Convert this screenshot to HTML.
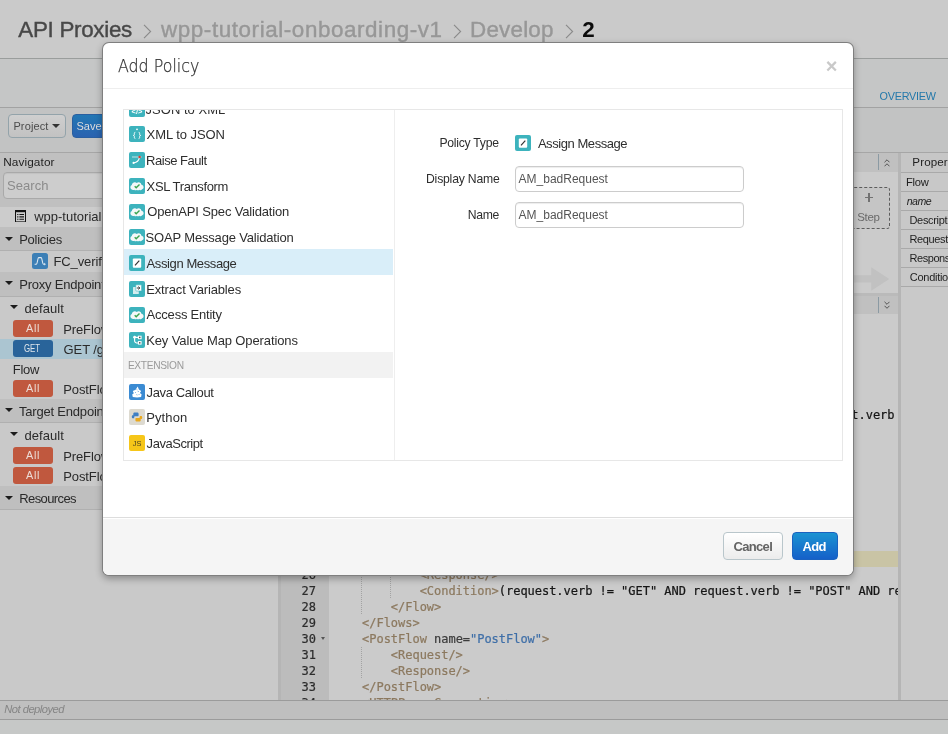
<!DOCTYPE html>
<html lang="en">
<head>
<meta charset="utf-8">
<title>API Proxies - wpp-tutorial-onboarding-v1 - Develop</title>
<style>
*{box-sizing:border-box}
html,body{margin:0;padding:0}
body{width:948px;height:734px;overflow:hidden;position:relative;will-change:transform;background:#c6c8c7;font-family:"Liberation Sans",sans-serif;font-size:13px;color:#2b2b2b}
.abs{position:absolute}
.t{position:absolute;white-space:nowrap;line-height:20px;height:20px}
.mono{font-family:"DejaVu Sans Mono","Liberation Mono",monospace;font-size:12px}
/* page chrome (dimmed by backdrop) */
#hdr{left:0;top:0;width:948px;height:58px;background:#cacaca;border-bottom:1px solid #9a9d9c;height:59px}
#sub{left:0;top:59px;width:948px;height:49px;background:#c5c6c6;border-bottom:1px solid #a2a2a2}
#tool{left:0;top:108px;width:948px;height:45px;background:#c2c3c3;border-bottom:1px solid #a6a6a6}
#nav{left:0;top:153px;width:278px;height:547px;background:#c9c9c9;overflow:hidden}
#navhead{left:0;top:0;width:278px;height:54px;background:#c0c0c0}
.nh{position:absolute;left:0;width:278px;background:#bfbfbf;border-bottom:1px solid #b0b0b0}
.caret{position:absolute;width:0;height:0;border-left:4px solid transparent;border-right:4px solid transparent;border-top:4px solid #1c1c1c}
.badge{position:absolute;left:13px;width:40px;height:17px;border-radius:3px;background:#c0583e}
.badge.get{background:#29649a}
#split1{left:278px;top:153px;width:3px;height:547px;background:#b5b5b5}
#split2{left:898px;top:153px;width:3px;height:547px;background:#b5b5b5}
#center{left:281px;top:153px;width:617px;height:547px;background:#cbcbcb;overflow:hidden}
#right{left:901px;top:153px;width:47px;height:547px;background:#c9c9c9;overflow:hidden}
.prow{position:absolute;left:0;width:47px;height:19px;border-bottom:1px solid #a9a9a9;background:#c8c8c8}
#status{left:0;top:700px;width:948px;height:20px;background:#bfbfbf;border-top:1px solid #9b9b9b;border-bottom:1px solid #9b9b9b}
/* modal */
#modal{left:102px;top:42px;width:752px;height:534px;background:#fff;border:1px solid rgba(0,0,0,.5);border-radius:7px;box-shadow:0 3px 7px rgba(0,0,0,.3);overflow:hidden}
#mhead{left:0;top:0;width:750px;height:46px;border-bottom:1px solid #eee}
#mfoot{left:0;top:474px;width:750px;height:58px;background:#f5f5f5;border-top:1px solid #ddd;box-shadow:inset 0 1px 0 #fff}
#pbox{left:20px;top:66px;width:720px;height:352px;border:1px solid #e7e7e7;overflow:hidden}
#plist{left:0;top:0;width:271px;height:350px;border-right:1px solid #eee;overflow:hidden}
.ic{position:absolute;left:5px;width:16px;height:16px;border-radius:2px;background:#3fb4bf;overflow:hidden}
.inp{position:absolute;left:391px;width:229px;height:26px;border:1px solid #ccc;border-radius:4px;background:#fff;box-shadow:inset 0 1px 1px rgba(0,0,0,.075)}
.cl{position:absolute;left:52.300px;letter-spacing:-.03px;-webkit-text-stroke:.22px;white-space:pre;font-family:"DejaVu Sans Mono","Liberation Mono",monospace;font-size:12px;line-height:16px;height:16px}
.ln{position:absolute;-webkit-text-stroke:.2px;left:0;width:35px;text-align:right;font-family:"DejaVu Sans Mono","Liberation Mono",monospace;font-size:12px;line-height:16px;height:16px;color:#2c2c2c}
.ig{position:absolute;width:1px;background:repeating-linear-gradient(to bottom,#a3a3a3 0,#a3a3a3 1px,transparent 1px,transparent 2px)}
.btn{position:absolute;top:489px;height:28px;border-radius:4px}
</style>
</head>
<body>
<div id="hdr" class="abs"></div>
<div id="sub" class="abs"></div>
<div id="tool" class="abs"><div class="abs" style="left:8px;top:6px;width:58px;height:24px;border:1px solid #93a3aa;border-radius:4px;background:linear-gradient(#cfcfcf,#c2c2c2)"></div><div class="abs" style="left:52.200px;top:16px;width:0;height:0;border-left:4px solid transparent;border-right:4px solid transparent;border-top:4.400px solid #333"></div><div class="abs" style="left:72px;top:6px;width:46px;height:24px;border-radius:4px;background:linear-gradient(#2277b4,#2a62b0);border:1px solid #2a5fa0"></div></div>
<svg class="abs" style="left:142.5px;top:24px" width="9" height="15" viewBox="0 0 9 15"><path d="M1 .8l6.600 6.700L1 14.200" fill="none" stroke="#8a8a8a" stroke-width="1.100"/></svg><svg class="abs" style="left:453px;top:24px" width="9" height="15" viewBox="0 0 9 15"><path d="M1 .8l6.600 6.700L1 14.200" fill="none" stroke="#8a8a8a" stroke-width="1.100"/></svg><svg class="abs" style="left:565px;top:24px" width="9" height="15" viewBox="0 0 9 15"><path d="M1 .8l6.600 6.700L1 14.200" fill="none" stroke="#8a8a8a" stroke-width="1.100"/></svg>
<div id="nav" class="abs"><div id="navhead" class="abs"></div>
<div class="abs" style="left:3px;top:18.500px;width:272px;height:27px;border:1px solid #a9a9a9;border-radius:4px;background:#cdcdcd;box-shadow:inset 0 1px 1px rgba(0,0,0,.06)"></div>
<div class="abs" style="left:0;top:53.500px;width:278px;height:20.500px;background:#cccccc"></div>
<svg class="abs" style="left:15px;top:56.800px" width="11" height="12.400" viewBox="0 0 11 12.400"><rect x=".5" y="1" width="10" height="10.900" fill="none" stroke="#111" stroke-width="1"/><rect x="0" y="0" width="11" height="2.200" fill="#111"/><path d="M2.200 4.500h1.200M4.400 4.500h4.600M2.200 6.900h1.200M4.400 6.900h4.600M2.200 9.300h1.200M4.400 9.300h4.600" stroke="#111" stroke-width="1.100"/></svg>
<div class="nh" style="top:74px;height:24.3px"></div>
<div class="nh" style="top:119px;height:24.5px"></div>
<div class="nh" style="top:246px;height:24.4px"></div>
<div class="nh" style="top:333px;height:24.2px"></div>
<div class="caret" style="left:5px;top:83.5px"></div>
<div class="caret" style="left:5px;top:128.4px"></div>
<div class="caret" style="left:10.4px;top:152.4px"></div>
<div class="caret" style="left:5px;top:255.4px"></div>
<div class="caret" style="left:10.4px;top:279.3px"></div>
<div class="caret" style="left:5px;top:342.5px"></div>
<div class="abs" style="left:32px;top:100px;width:16px;height:16px;border-radius:2.500px;background:#3c7fb6"><svg width="16" height="16" viewBox="0 0 16 16" style="display:block;"><path d="M2.600 11.200h1.600c1.400 0 1.400-6.600 2.400-6.600h2.600c1 0 1 6.600 2.400 6.600h1" fill="none" stroke="#dfe9f2" stroke-width="1.100"/><path d="M12.200 9.800l1.700 1.400-1.700 1.400z" fill="#dfe9f2"/></svg></div>
<div class="abs" style="left:0;top:186px;width:278px;height:19.600px;background:#abc5d1"></div>
<div class="badge" style="top:167px"></div>
<div class="badge get" style="top:187px"></div>
<div class="badge" style="top:227px"></div>
<div class="badge" style="top:294px"></div>
<div class="badge" style="top:314px"></div>
<span class="t" style="left:3.20px;top:-1.30px;font-size:11.8px;color:#1f1f1f;letter-spacing:0.100px;">Navigator</span>
<span class="t" style="left:7.10px;top:22.70px;font-size:13px;color:#8b8b8b;letter-spacing:0.020px;">Search</span>
<span class="t" style="left:34.20px;top:54.40px;font-size:13px;color:#2a2a2a;">wpp-tutorial-onboarding-v1</span>
<span class="t" style="left:19.20px;top:76.50px;font-size:13px;color:#2a2a2a;letter-spacing:-0.257px;">Policies</span>
<span class="t" style="left:53.40px;top:98.50px;font-size:13px;color:#2a2a2a;letter-spacing:-0.100px;">FC_verifyAPIKey</span>
<span class="t" style="left:19.20px;top:121.60px;font-size:13px;color:#2a2a2a;letter-spacing:-0.200px;">Proxy Endpoints</span>
<span class="t" style="left:24.40px;top:145.60px;font-size:13px;color:#2a2a2a;letter-spacing:0.067px;">default</span>
<span class="t" style="left:26.10px;top:164.50px;font-size:10.8px;color:#ecdcd6;letter-spacing:0.600px;">All</span>
<span class="t" style="left:63.20px;top:166.80px;font-size:13px;color:#2a2a2a;letter-spacing:-0.100px;">PreFlow</span>
<span class="t" style="left:24.10px;top:185.70px;font-size:10px;color:#dfe6ec;transform:scaleX(0.786);transform-origin:0 0;">GET</span>
<span class="t" style="left:63.60px;top:186.60px;font-size:13px;color:#2a2a2a;letter-spacing:-0.100px;">GET /getstarted</span>
<span class="t" style="left:12.70px;top:206.70px;font-size:13px;color:#2a2a2a;letter-spacing:-0.233px;">Flow</span>
<span class="t" style="left:26.10px;top:224.50px;font-size:10.8px;color:#ecdcd6;letter-spacing:0.600px;">All</span>
<span class="t" style="left:63.20px;top:226.70px;font-size:13px;color:#2a2a2a;letter-spacing:-0.100px;">PostFlow</span>
<span class="t" style="left:19.00px;top:248.60px;font-size:13px;color:#2a2a2a;letter-spacing:-0.200px;">Target Endpoints</span>
<span class="t" style="left:24.40px;top:272.60px;font-size:13px;color:#2a2a2a;letter-spacing:0.067px;">default</span>
<span class="t" style="left:26.10px;top:291.50px;font-size:10.8px;color:#ecdcd6;letter-spacing:0.600px;">All</span>
<span class="t" style="left:63.20px;top:293.80px;font-size:13px;color:#2a2a2a;letter-spacing:-0.100px;">PreFlow</span>
<span class="t" style="left:26.10px;top:311.50px;font-size:10.8px;color:#ecdcd6;letter-spacing:0.600px;">All</span>
<span class="t" style="left:63.20px;top:313.80px;font-size:13px;color:#2a2a2a;letter-spacing:-0.100px;">PostFlow</span>
<span class="t" style="left:19.20px;top:335.60px;font-size:13px;color:#2a2a2a;letter-spacing:-0.588px;">Resources</span></div>
<div id="split1" class="abs"></div>
<div id="center" class="abs"><div class="abs" style="left:0;top:0;width:617px;height:18.600px;background:#c0c0c0"></div>
<div class="abs" style="left:597px;top:1.200px;width:1px;height:15.500px;background:#8b9aa3"></div>
<svg class="abs" style="left:603px;top:6.3px" width="6" height="8.200" viewBox="0 0 6 8.200"><path d="M.5 3.300L3 .8l2.500 2.500M.5 7.300L3 4.800l2.500 2.500" fill="none" stroke="#484848" stroke-width=".9"/></svg>
<div class="abs" style="left:520px;top:34px;width:88.800px;height:41.800px;border:1px dashed #5c5c5c;border-radius:3px;background:#c5c5c5"></div>
<div class="abs" style="left:583.500px;top:43.900px;width:8.400px;height:1.500px;background:#727272"></div>
<div class="abs" style="left:587px;top:40.400px;width:1.500px;height:8.400px;background:#727272"></div>
<svg class="abs" style="left:500px;top:114px" width="109" height="24" viewBox="0 0 109 24"><path d="M0 8.200h90.200V.2L108.300 12 90.200 23.800V15.400H0z" fill="#c1c1c1"/></svg>
<div class="abs" style="left:0;top:140.300px;width:617px;height:2.600px;background:#bababa"></div>
<div class="abs" style="left:0;top:142.800px;width:617px;height:18.400px;background:#c0c0c0"></div>
<div class="abs" style="left:597px;top:144px;width:1px;height:16px;background:#8b9aa3"></div>
<svg class="abs" style="left:603px;top:148px" width="6" height="8.200" viewBox="0 0 6 8.200"><path d="M.5 .8L3 3.300 5.500.8M.5 4.800L3 7.300l2.500-2.500" fill="none" stroke="#484848" stroke-width=".9"/></svg>
<div id="ed" class="abs" style="left:0;top:161.200px;width:617px;height:386px;background:#cbcbcb"></div>
<div class="abs" style="left:0;top:161.200px;width:48px;height:386px;background:#bcbcbc"></div>
<div class="abs" style="left:48px;top:397.500px;width:569px;height:16px;background:#c9c4a5"></div>
<div class="abs" style="left:0;top:397.500px;width:48px;height:16px;background:#b4b4b4"></div>
<div class="ig" style="left:80.3px;top:413.5px;height:48.0px"></div>
<div class="ig" style="left:109.3px;top:413.5px;height:32.0px"></div>
<div class="ig" style="left:80.3px;top:493.5px;height:32.0px"></div>
<div class="abs" style="left:39.500px;top:484px;width:0;height:0;border-left:2.600px solid transparent;border-right:2.600px solid transparent;border-top:3.200px solid #555"></div>
<div class="cl" style="top:253.5px">            <span style="color:#8c795f">&lt;Condition&gt;</span><span style="color:#161616">(proxy.pathsuffix MatchesPath "/get") and (request.verb = "GET")</span><span style="color:#8c795f">&lt;/Condition&gt;</span></div>
<div class="ln" style="top:253.5px">16</div>
<div class="cl" style="top:413.5px">            <span style="color:#8c795f">&lt;Response/&gt;</span></div>
<div class="ln" style="top:413.5px">26</div>
<div class="cl" style="top:429.5px">            <span style="color:#8c795f">&lt;Condition&gt;</span><span style="color:#161616">(request.verb != "GET" AND request.verb != "POST" AND request.verb != "PUT")</span><span style="color:#8c795f">&lt;/Condition&gt;</span></div>
<div class="ln" style="top:429.5px">27</div>
<div class="cl" style="top:445.5px">        <span style="color:#8c795f">&lt;/Flow&gt;</span></div>
<div class="ln" style="top:445.5px">28</div>
<div class="cl" style="top:461.5px">    <span style="color:#8c795f">&lt;/Flows&gt;</span></div>
<div class="ln" style="top:461.5px">29</div>
<div class="cl" style="top:477.5px">    <span style="color:#8c795f">&lt;PostFlow</span> <span style="color:#3c3c3c">name</span><span style="color:#3c3c3c">=</span><span style="color:#3f6fa8">"PostFlow"</span><span style="color:#8c795f">&gt;</span></div>
<div class="ln" style="top:477.5px">30</div>
<div class="cl" style="top:493.5px">        <span style="color:#8c795f">&lt;Request/&gt;</span></div>
<div class="ln" style="top:493.5px">31</div>
<div class="cl" style="top:509.5px">        <span style="color:#8c795f">&lt;Response/&gt;</span></div>
<div class="ln" style="top:509.5px">32</div>
<div class="cl" style="top:525.5px">    <span style="color:#8c795f">&lt;/PostFlow&gt;</span></div>
<div class="ln" style="top:525.5px">33</div>
<div class="cl" style="top:541.5px">    <span style="color:#8c795f">&lt;HTTPProxyConnection&gt;</span></div>
<div class="ln" style="top:541.5px">34</div>
<span class="t" style="left:576.30px;top:53.50px;font-size:11.5px;color:#6a6a6a;letter-spacing:-0.367px;">Step</span></div>
<div id="split2" class="abs"></div>
<div id="right" class="abs"><div class="prow" style="top:0;height:20px;background:#c6c6c6"></div>
<div class="prow" style="top:20px"></div>
<div class="prow" style="top:39px"></div>
<div class="prow" style="top:58px"></div>
<div class="prow" style="top:77px"></div>
<div class="prow" style="top:96px"></div>
<div class="prow" style="top:115px"></div>
<span class="t" style="left:11.30px;top:-1.40px;font-size:11.6px;color:#1f1f1f;letter-spacing:0.120px;">Properties</span>
<span class="t" style="left:4.90px;top:18.60px;font-size:11.2px;color:#1f1f1f;letter-spacing:-0.233px;">Flow</span>
<span class="t" style="left:5.70px;top:37.70px;font-size:10.6px;color:#1f1f1f;letter-spacing:-0.500px;font-style:italic;">name</span>
<span class="t" style="left:8.50px;top:56.60px;font-size:11px;color:#1f1f1f;letter-spacing:-0.320px;">Description</span>
<span class="t" style="left:8.50px;top:75.70px;font-size:11px;color:#1f1f1f;letter-spacing:-0.380px;">Request</span>
<span class="t" style="left:8.50px;top:94.60px;font-size:11px;color:#1f1f1f;letter-spacing:-0.450px;">Response</span>
<span class="t" style="left:8.80px;top:113.60px;font-size:11px;color:#1f1f1f;letter-spacing:-0.280px;">Condition</span></div>
<div id="status" class="abs"></div>
<span class="t" style="left:18.30px;top:20.00px;font-size:22.4px;color:#484848;letter-spacing:-0.300px;-webkit-text-stroke:.4px #484848;">API Proxies</span>
<span class="t" style="left:161.00px;top:20.00px;font-size:22.4px;color:#979797;letter-spacing:0.588px;-webkit-text-stroke:.4px #979797;">wpp-tutorial-onboarding-v1</span>
<span class="t" style="left:470.00px;top:20.00px;font-size:22.4px;color:#979797;letter-spacing:0.217px;-webkit-text-stroke:.4px #979797;">Develop</span>
<span class="t" style="left:582.30px;top:20.00px;font-size:22.4px;color:#0c0c0c;font-weight:bold;">2</span>
<span class="t" style="left:879.60px;top:85.90px;font-size:10.8px;color:#2378aa;letter-spacing:-0.243px;">OVERVIEW</span>
<span class="t" style="left:13.40px;top:115.80px;font-size:11px;color:#4c4c4c;letter-spacing:0.133px;">Project</span>
<span class="t" style="left:76.40px;top:115.80px;font-size:11px;color:#dcdcdc;letter-spacing:0.033px;">Save</span>
<span class="t" style="left:4.30px;top:699.30px;font-size:11.2px;color:#858585;letter-spacing:-0.527px;font-style:italic;">Not deployed</span>
<div id="modal" class="abs"><div id="mhead" class="abs"></div>
<div id="pbox" class="abs"><div id="plist" class="abs"><div class="abs" style="left:0;top:139.100px;width:269px;height:25.800px;background:#d9eef9"></div>
<div class="abs" style="left:0;top:242.100px;width:269px;height:25.800px;background:#f2f2f2"></div>
<div class="ic" style="left:5px;top:-9.50px;background:#3db3bd"><svg width="16" height="16" viewBox="0 0 16 16" style="display:block;"><text x="8" y="13.300" font-size="7.500" font-family="Liberation Sans,sans-serif" font-weight="bold" fill="#fff" text-anchor="middle">&lt;/&gt;</text></svg></div>
<div class="ic" style="left:5px;top:16.25px;background:#3db3bd"><svg width="16" height="16" viewBox="0 0 16 16" style="display:block;"><circle cx="8" cy="3.300" r=".9" fill="#fff"/><path d="M6.300 6.300c-1.300 0-.9 1.400-.9 2.200 0 .7-.6.900-1 .9.400 0 1 .2 1 .9 0 .800-.4 2.200.9 2.200M9.700 6.300c1.300 0 .9 1.400.9 2.200 0 .7.600.900 1 .9-.4 0-1 .2-1 .9 0 .800.4 2.200-.9 2.200" fill="none" stroke="#fff" stroke-width=".95"/></svg></div>
<div class="ic" style="left:5px;top:42.00px;background:#3db3bd"><svg width="16" height="16" viewBox="0 0 16 16" style="display:block;"><path d="M3 5h9.600" fill="none" stroke="#cfeaec" stroke-width=".9"/><path d="M10.400 5.600c-.6 3-2.400 4.800-5.600 5.200" fill="none" stroke="#fff" stroke-width="1.100"/><circle cx="4.600" cy="10.900" r="1.100" fill="#fff"/><circle cx="10.600" cy="5" r="1.200" fill="#e23b2e"/></svg></div>
<div class="ic" style="left:5px;top:67.75px;background:#3db3bd"><svg width="16" height="16" viewBox="0 0 16 16" style="display:block;"><path d="M3.300 11.700a2.500 2.500 0 0 1-.5-4.700 3 3 0 0 1 5-2 2.900 2.900 0 0 1 4.700 1.700 2.400 2.400 0 0 1 .4 4.700c-.5 1-1.900 1.100-2.600.3-.6.800-1.900.800-2.500 0-.6.800-1.900.800-2.500 0-.5.500-1.400.500-2 0z" fill="#f4f8f8"/><path d="M5.700 8.200l1.500 1.500 3.300-3.200" fill="none" stroke="#3aa44e" stroke-width="1.400"/></svg></div>
<div class="ic" style="left:5px;top:93.50px;background:#3db3bd"><svg width="16" height="16" viewBox="0 0 16 16" style="display:block;"><path d="M3.300 11.700a2.500 2.500 0 0 1-.5-4.700 3 3 0 0 1 5-2 2.900 2.900 0 0 1 4.700 1.700 2.400 2.400 0 0 1 .4 4.700c-.5 1-1.900 1.100-2.600.3-.6.800-1.900.800-2.500 0-.6.800-1.900.800-2.500 0-.5.500-1.400.500-2 0z" fill="#f4f8f8"/><path d="M5.700 8.200l1.500 1.500 3.300-3.200" fill="none" stroke="#3aa44e" stroke-width="1.400"/></svg></div>
<div class="ic" style="left:5px;top:119.25px;background:#3db3bd"><svg width="16" height="16" viewBox="0 0 16 16" style="display:block;"><path d="M3.300 11.700a2.500 2.500 0 0 1-.5-4.700 3 3 0 0 1 5-2 2.900 2.900 0 0 1 4.700 1.700 2.400 2.400 0 0 1 .4 4.700c-.5 1-1.900 1.100-2.600.3-.6.800-1.900.800-2.500 0-.6.800-1.900.800-2.500 0-.5.500-1.400.500-2 0z" fill="#f4f8f8"/><path d="M5.700 8.200l1.500 1.500 3.300-3.200" fill="none" stroke="#3aa44e" stroke-width="1.400"/></svg></div>
<div class="ic" style="left:5px;top:145.00px;background:#3db3bd"><svg width="16" height="16" viewBox="0 0 16 16" style="display:block;"><rect x="3.800" y="3.400" width="8.400" height="9.400" rx="1" fill="#fff"/><path d="M6 10.400l4.300-4.800" stroke="#333" stroke-width="1.200"/></svg></div>
<div class="ic" style="left:5px;top:170.75px;background:#3db3bd"><svg width="16" height="16" viewBox="0 0 16 16" style="display:block;"><rect x="4" y="6" width="5.800" height="7" rx=".6" fill="#d3ecee"/><rect x="6.800" y="3.800" width="5.800" height="6.200" rx=".6" fill="#fff" stroke="#3db3bd" stroke-width=".6"/><path d="M7.800 7h2.600M9.400 5.600L10.900 7 9.400 8.400" fill="none" stroke="#333" stroke-width="1"/></svg></div>
<div class="ic" style="left:5px;top:196.50px;background:#3db3bd"><svg width="16" height="16" viewBox="0 0 16 16" style="display:block;"><path d="M3.300 11.700a2.500 2.500 0 0 1-.5-4.700 3 3 0 0 1 5-2 2.900 2.900 0 0 1 4.700 1.700 2.400 2.400 0 0 1 .4 4.700c-.5 1-1.900 1.100-2.600.3-.6.800-1.900.800-2.500 0-.6.800-1.900.800-2.500 0-.5.500-1.400.500-2 0z" fill="#f4f8f8"/><path d="M5.700 8.200l1.500 1.500 3.300-3.200" fill="none" stroke="#3aa44e" stroke-width="1.400"/></svg></div>
<div class="ic" style="left:5px;top:222.25px;background:#3db3bd"><svg width="16" height="16" viewBox="0 0 16 16" style="display:block;"><path d="M5.600 5.200v3.200c0 1.900 1 2.600 3.400 2.600M5.600 5.400h3.400" fill="none" stroke="#fff" stroke-width="1.100"/><circle cx="5.600" cy="5.200" r="1.400" fill="#fff"/><rect x="8.900" y="3.700" width="3.700" height="3.500" fill="#fff"/><rect x="8.900" y="9.100" width="3.700" height="3.500" fill="#fff"/><rect x="10" y="4.700" width="1.500" height="1.500" fill="#555"/><rect x="10" y="10.100" width="1.500" height="1.500" fill="#555"/></svg></div>
<div class="ic" style="left:5px;top:274.00px;background:#3b8bd3"><svg width="16" height="16" viewBox="0 0 16 16" style="display:block;"><path d="M8.700 2.400l1.200 3.200 2.300 1.300-1.300 2 1.700 1.300-.5 2.800-4 .6-4.300-.6-.6-2.400 1.600-1.300-1-2.200 2.800-1.300z" fill="#fff"/><path d="M6.200 8.200l.8.800M9 7l.6 1M7.400 10.600l1 .4M9.800 10l.5.900M7.800 5.400l.5.800" stroke="#3b8bd3" stroke-width=".7"/></svg></div>
<div class="ic" style="left:5px;top:299.20px;background:#dddad0"><svg width="16" height="16" viewBox="0 0 16 16" style="display:block;"><path d="M7.400 3.600H5.800c-1 0-1.500.5-1.500 1.400v1.300h-.5c-.8 0-1 .6-1 1.500s.3 1.500 1 1.500h1.400V8.200c0-.7.400-1 1.100-1h2.300c.7 0 1-.4 1-1V5c0-.9-.6-1.400-1.600-1.400z" fill="#3f7fc4"/><path d="M8.600 12.600h1.600c1 0 1.500-.5 1.500-1.400V9.900h.5c.8 0 1-.6 1-1.500s-.3-1.500-1-1.500h-1.400V8c0 .7-.4 1-1.100 1H7.400c-.7 0-1 .4-1 1v1.200c0 .9.600 1.400 1.600 1.400z" fill="#eaa81c"/></svg></div>
<div class="ic" style="left:5px;top:325.10px;background:#f6c619"><svg width="16" height="16" viewBox="0 0 16 16" style="display:block;"><text x="8" y="10.700" font-size="7.400" font-family="Liberation Sans,sans-serif" fill="#4a4220" text-anchor="middle">JS</text></svg></div>
<span class="t" style="left:21.60px;top:-10.25px;font-size:13px;color:#2e2e2e;letter-spacing:0.020px;">JSON to XML</span>
<span class="t" style="left:22.60px;top:15.10px;font-size:13px;color:#2e2e2e;letter-spacing:-0.060px;">XML to JSON</span>
<span class="t" style="left:22.10px;top:40.85px;font-size:13px;color:#2e2e2e;letter-spacing:-0.480px;">Raise Fault</span>
<span class="t" style="left:22.60px;top:66.60px;font-size:13px;color:#2e2e2e;letter-spacing:-0.367px;">XSL Transform</span>
<span class="t" style="left:23.20px;top:92.35px;font-size:13px;color:#2e2e2e;letter-spacing:-0.164px;">OpenAPI Spec Validation</span>
<span class="t" style="left:21.60px;top:118.10px;font-size:13px;color:#2e2e2e;letter-spacing:-0.173px;">SOAP Message Validation</span>
<span class="t" style="left:22.60px;top:143.85px;font-size:13px;color:#2e2e2e;letter-spacing:-0.400px;">Assign Message</span>
<span class="t" style="left:22.20px;top:169.60px;font-size:13px;color:#2e2e2e;letter-spacing:-0.144px;">Extract Variables</span>
<span class="t" style="left:22.60px;top:195.35px;font-size:13px;color:#2e2e2e;letter-spacing:-0.217px;">Access Entity</span>
<span class="t" style="left:22.20px;top:221.10px;font-size:13px;color:#2e2e2e;letter-spacing:-0.117px;">Key Value Map Operations</span>
<span class="t" style="left:3.90px;top:245.90px;font-size:10.2px;color:#9a9a9a;letter-spacing:-0.338px;">EXTENSION</span>
<span class="t" style="left:22.60px;top:272.50px;font-size:13px;color:#2e2e2e;letter-spacing:-0.382px;">Java Callout</span>
<span class="t" style="left:22.20px;top:298.20px;font-size:13px;color:#2e2e2e;letter-spacing:0.120px;">Python</span>
<span class="t" style="left:22.60px;top:323.90px;font-size:13px;color:#2e2e2e;letter-spacing:-0.456px;">JavaScript</span></div><div class="ic" style="left:391px;top:25.20px;background:#3db3bd"><svg width="16" height="16" viewBox="0 0 16 16" style="display:block;"><rect x="3.800" y="3.400" width="8.400" height="9.400" rx="1" fill="#fff"/><path d="M6 10.400l4.300-4.800" stroke="#333" stroke-width="1.200"/></svg></div>
<div class="inp" style="top:56px"></div><div class="inp" style="top:92px"></div>
<span class="t" style="left:315.40px;top:23.00px;font-size:12.2px;color:#2e2e2e;letter-spacing:-0.250px;">Policy Type</span>
<span class="t" style="left:302.00px;top:58.50px;font-size:12.2px;color:#2e2e2e;letter-spacing:-0.191px;">Display Name</span>
<span class="t" style="left:343.70px;top:94.50px;font-size:12.2px;color:#2e2e2e;letter-spacing:-0.267px;">Name</span>
<span class="t" style="left:413.90px;top:23.70px;font-size:13px;color:#2e2e2e;letter-spacing:-0.438px;">Assign Message</span>
<span class="t" style="left:394.60px;top:58.50px;font-size:12px;color:#555;letter-spacing:-0.008px;">AM_badRequest</span>
<span class="t" style="left:394.60px;top:94.50px;font-size:12px;color:#555;letter-spacing:-0.008px;">AM_badRequest</span></div>
<div id="mfoot" class="abs"></div>
<div class="btn" style="left:620px;width:60px;border:1px solid #b9c6cb;background:linear-gradient(#fff,#ececec)"></div>
<div class="btn" style="left:689px;width:46px;border:1px solid #1a62c0;background:linear-gradient(#1b93d2,#1560c9)"></div>
<span class="t" style="left:14.70px;top:13.10px;font-size:18px;color:#333;font-family:'DejaVu Sans Light','DejaVu Sans','Liberation Sans',sans-serif;font-weight:200;-webkit-text-stroke:.25px #333;transform:scaleX(0.880);transform-origin:0 0;">Add Policy</span>
<span class="t" style="left:722.70px;top:13.20px;font-size:20px;color:#c9c9c9;font-weight:bold;">×</span>
<span class="t" style="left:630.40px;top:493.50px;font-size:13px;color:#636363;letter-spacing:-0.640px;font-weight:bold;">Cancel</span>
<span class="t" style="left:699.60px;top:493.50px;font-size:13px;color:#fff;letter-spacing:-0.700px;font-weight:bold;">Add</span></div>
</body>
</html>
